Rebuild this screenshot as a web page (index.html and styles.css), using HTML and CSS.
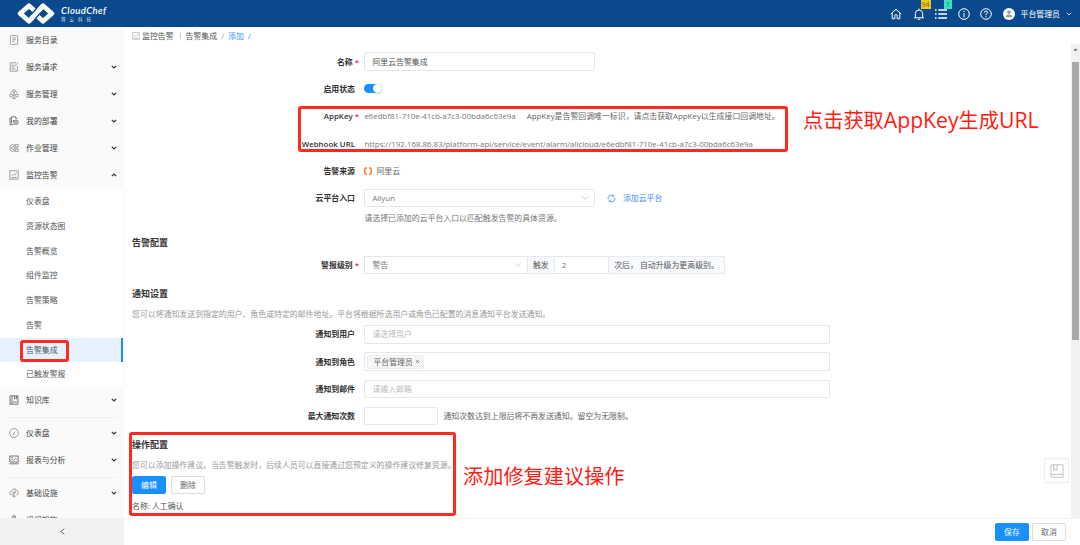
FILE: index.html
```html
<!DOCTYPE html>
<html lang="zh-CN">
<head>
  <meta charset="utf-8">
  <title>CloudChef</title>
  <link rel="stylesheet" href="styles.css">
</head>
<body>
  <!-- shared icon shapes -->
  <svg class="defs">
    <symbol id="down" viewBox="0 0 6 6"><path d="M.8 1.8 3 4 5.2 1.8"/></symbol>
    <symbol id="chart" viewBox="0 0 10 10"><path d="M.8.8h8.4v8.4H.8zM2.2 7.6h5.6M2.5 6l2-2 1.2 1.2 2.1-2.7"/></symbol>
  </svg>

  <header class="header">
    <div class="logo">
      <svg class="logo-mark" viewBox="0 0 38 23">
        <g fill="none" stroke-linejoin="round">
          <path d="M17 8.2 12 3.8 3.2 11.5 12 19.2 26 3.8 34.8 11.5 26 19.2 21 14.8" stroke="#fff" stroke-width="4.8"/>
          <path d="M16.2 14.6 21.8 8.4" stroke="#0a4a8c" stroke-width="6.4"/>
          <path d="M12 19.2 26 3.8" stroke="#fff" stroke-width="4.6"/>
        </g>
      </svg>
      <div class="logo-text">
        <div class="logo-name">CloudChef</div>
        <div class="logo-sub">骞云科技</div>
      </div>
    </div>
    <div class="tools">
      <span class="tool"><svg viewBox="0 0 12 12"><path d="M.8 6.2 6 1.2l5.2 5M2.2 5.2v5.6h2.6V7.2Q6 6 7.2 7.2v3.6h2.6V5.2"/></svg></span>
      <span class="tool"><svg viewBox="0 0 12 12"><path d="M1 9.8h10M2.4 9.8V5.4Q2.6 2 6 2t3.6 3.4v4.4M6 .6V2M4.8 11.3h2.4"/></svg><em class="badge yellow">94</em></span>
      <span class="tool"><svg viewBox="0 0 12 12"><path d="M0 2h1.6M0 6h1.6M0 10h1.6M3.3 2H12M3.3 6H12M3.3 10H12" stroke-width="1.4"/></svg><em class="badge green">1</em></span>
      <span class="tool"><svg viewBox="0 0 12 12"><circle cx="6" cy="6" r="5.3"/><path d="M6 5v4.2M6 2.8v1.2"/></svg></span>
      <span class="tool"><svg viewBox="0 0 12 12"><circle cx="6" cy="6" r="5.3"/><path d="M4.3 4.7Q4.5 3 6 3t1.7 1.5Q7.6 5.3 6 6.3v1M6 8.2v1.1"/></svg></span>
      <span class="avatar"><svg viewBox="0 0 12 12"><circle cx="6" cy="4.3" r="1.8"/><path d="M2.9 9.3V8Q3.3 6.6 6 6.6T9.1 8v1.3z"/></svg></span>
      <span class="user">平台管理员</span>
      <svg class="user-arrow"><use href="#down"/></svg>
    </div>
  </header>

  <div class="layout">
    <aside class="sidebar">
      <nav class="menu">
        <div class="item"><svg class="icon" viewBox="0 0 10 10"><path d="M2.3.6h5.4q1 0 1 1v6.8q0 1-1 1H2.3q-1 0-1-1V1.6q0-1 1-1zM3.2 3h3.8M3.2 4.8h3.8M3.2 6.6h2.3"/></svg>服务目录</div>
        <div class="item"><svg class="icon" viewBox="0 0 10 10"><path d="M7 .8H1.2v8.4h7.2V4M2.6 3.2h3M2.6 5h3M2.6 7h4M5.8 3.8 9.4.6"/></svg>服务请求<svg class="arrow"><use href="#down"/></svg></div>
        <div class="item"><svg class="icon" viewBox="0 0 10 10"><circle cx="5" cy="2" r="1.4"/><circle cx="2" cy="6.6" r="1.4"/><circle cx="8" cy="6.6" r="1.4"/><circle cx="5" cy="5.5" r="1"/><path d="M3 9.3h4M5 6.5v2.8M1.4 4.4 3.2 2.2M8.6 4.4 6.8 2.2"/></svg>服务管理<svg class="arrow"><use href="#down"/></svg></div>
        <div class="item"><svg class="icon dark" viewBox="0 0 10 10"><path d="M4.5 8.6H1V2h1.5V.8h4V2h1.2v1M2.5 2.5v5M4.3 4v2"/><circle cx="7" cy="6.3" r="2.2"/><circle cx="7" cy="6.3" r=".6"/></svg>我的部署<svg class="arrow"><use href="#down"/></svg></div>
        <div class="item"><svg class="icon" viewBox="0 0 10 10"><path d="M4 1 1 3v4l3 2M4.2 3 2.3 5l1.9 2M5 1v8M6.4 1.4h2.8v2.4H6.4zM6.4 6.2h2.8v2.4H6.4zM5 5h4"/></svg>作业管理<svg class="arrow"><use href="#down"/></svg></div>
        <div class="item"><svg class="icon"><use href="#chart"/></svg>监控告警<svg class="arrow up"><use href="#down"/></svg></div>
        <div class="submenu">
          <div class="subitem">仪表盘</div>
          <div class="subitem">资源状态图</div>
          <div class="subitem">告警概览</div>
          <div class="subitem">组件监控</div>
          <div class="subitem">告警策略</div>
          <div class="subitem">告警</div>
          <div class="subitem active">告警集成</div>
          <div class="subitem">已触发警报</div>
        </div>
        <div class="item"><svg class="icon dark" viewBox="0 0 10 10"><path d="M1 .8h8v8.4H1zM3 1v8M5.5 1v3l1-.8 1 .8V1M4 7h4"/></svg>知识库<svg class="arrow"><use href="#down"/></svg></div>
        <div class="divider"></div>
        <div class="item"><svg class="icon" viewBox="0 0 10 10"><circle cx="5" cy="5" r="4.4"/><path d="M4 6.3 6.2 3.5M4 6.3h1.3"/></svg>仪表盘<svg class="arrow"><use href="#down"/></svg></div>
        <div class="item"><svg class="icon dark" viewBox="0 0 10 10"><path d="M.8 1h8.4v6H.8zM.5 8.8h9M2.2 2.8h2M2.2 4.8h1.5M4.5 5.5l2-2 1.2 1"/></svg>报表与分析<svg class="arrow"><use href="#down"/></svg></div>
        <div class="divider"></div>
        <div class="item"><svg class="icon" viewBox="0 0 10 10"><path d="M2.5 7Q.5 6.6.7 4.8.9 3.3 2.5 3.2 3 .9 5.2.9t2.8 2q1.5.3 1.4 2Q9.2 6.6 7.6 7M3 5.4l4-2.6M3 7l4-3M5 6v3.4M3.5 8.2h3"/></svg>基础设施<svg class="arrow"><use href="#down"/></svg></div>
        <div class="item"><svg class="icon dark" viewBox="0 0 10 10"><circle cx="5" cy="2" r="1.4"/><path d="M5 3.4V6M1.5 8V6h7v2"/></svg>组织架构</div>
      </nav>
      <div class="collapse"><svg viewBox="0 0 6 8"><path d="M5.2.8.8 4l4.4 3.2"/></svg></div>
    </aside>

    <main class="main">
      <div class="breadcrumb">
        <svg class="crumb-icon"><use href="#chart"/></svg>
        <span>监控告警</span><i class="bar"></i><span>告警集成</span><span class="slash">/</span><a>添加</a><a class="slash">/</a>
      </div>

      <div class="content">
        <form class="form">
          <div class="row"><label class="required">名称</label><div class="input w230 text">阿里云告警集成</div></div>
          <div class="row"><label>启用状态</label><span class="switch"></span></div>
          <div class="row"><label class="required">AppKey</label><span class="uuid">e6edbf81-710e-41cb-a7c3-00bda6c63e9a</span><span>AppKey是告警回调唯一标识，请点击获取AppKey以生成接口回调地址。</span></div>
          <div class="row"><label>Webhook URL</label><span class="url">https://192.168.86.83/platform-api/service/event/alarm/alicloud/e6edbf81-710e-41cb-a7c3-00bda6c63e9a</span></div>
          <div class="row"><label>告警来源</label><svg class="aliyun" viewBox="0 0 8 8"><path d="M3 1H2Q.8 1 .8 2.2v3.6Q.8 7 2 7h1M5 1h1q1.2 0 1.2 1.2v3.6Q7.2 7 6 7H5"/></svg><span>阿里云</span></div>
          <div class="row"><label>云平台入口</label>
            <div class="input w230">Aliyun<svg class="select-arrow"><use href="#down"/></svg></div>
            <svg class="refresh" viewBox="0 0 10 10"><path d="M1.2 5.8A3.8 3.8 0 0 1 7.3 2M8.8 4.2A3.8 3.8 0 0 1 2.7 8"/><path d="M7.6 1v1.7H5.8M2.4 9V7.3h1.8" stroke-width=".7"/></svg>
            <a>添加云平台</a>
          </div>
          <p class="help">请选择已添加的云平台入口以匹配触发告警的具体资源。</p>

          <h3>告警配置</h3>
          <div class="row level"><label class="required">警报级别</label>
            <div class="group">
              <div class="input level-select">警告<svg class="select-arrow"><use href="#down"/></svg></div>
              <div class="addon">触发</div>
              <div class="input count">2</div>
              <div class="addon last">次后， 自动升级为更高级别。</div>
            </div>
          </div>

          <h3 class="notify">通知设置</h3>
          <p class="desc notify-desc">您可以将通知发送到指定的用户、角色或特定的邮件地址。平台将根据所选用户或角色已配置的消息通知平台发送通知。</p>
          <div class="row"><label>通知到用户</label><div class="input wide placeholder">请选择用户</div></div>
          <div class="row"><label>通知到角色</label><div class="input wide tags"><span class="tag">平台管理员<svg viewBox="0 0 6 6"><path d="m1 1 4 4M5 1 1 5"/></svg></span></div></div>
          <div class="row"><label>通知到邮件</label><div class="input wide placeholder">请输入邮箱</div></div>
          <div class="row"><label>最大通知次数</label><div class="input max"></div><span>通知次数达到上限后将不再发送通知。留空为无限制。</span></div>

          <h3 class="action">操作配置</h3>
          <p class="desc">您可以添加操作建议。当告警触发时，后续人员可以直接通过您预定义的操作建议修复资源。</p>
          <div class="buttons"><span class="btn primary">编辑</span><span class="btn">删除</span></div>
          <p class="name">名称: 人工确认</p>
        </form>
        <div class="scrollbar"><svg viewBox="0 0 6 4"><path d="M.5 3.4 3 .6l2.5 2.8z"/></svg><div class="thumb"></div></div>
      </div>

      <footer class="footer"><span class="btn primary">保存</span><span class="btn">取消</span></footer>
    </main>
  </div>

  <div class="manual"><svg viewBox="0 0 14 14"><path d="M1 11.4V1.6q0-.8.8-.8H13v9.6H2.2Q1 10.4 1 11.8t1.2 1.4H13v-2.8M3.6 1v5.6l1.7-1.3L7 6.6V1"/></svg></div>

  <!-- annotations -->
  <div class="mark mark-menu"></div>
  <div class="mark mark-key"></div>
  <div class="mark mark-action"></div>
  <div class="note note-key">点击获取<span>AppKey</span>生成<span>URL</span></div>
  <div class="note note-action">添加修复建议操作</div>
</body>
</html>
```

FILE: styles.css
```css
* {
  box-sizing: border-box;
}
body {
  margin: 0;
  width: 1080px;
  height: 545px;
  overflow: hidden;
  position: relative;
  display: flex;
  flex-direction: column;
  font: 7.9px/12px "Open Sans", "Noto Sans CJK SC", sans-serif;
  color: #555;
  background: #fff;
}
svg {
  fill: none;
  stroke: currentColor;
  flex: none;
}
.defs {
  display: none;
}
a {
  color: #3d8ef8;
}
p {
  margin: 0;
}

/* header */
.header {
  height: 27px;
  flex: none;
  display: flex;
  justify-content: space-between;
  padding-left: 17px;
  background: #0a4a8c;
  color: #fff;
}
.logo {
  display: flex;
  align-items: center;
  gap: 6px;
}
.logo-mark {
  width: 38px;
  height: 23px;
  stroke: none;
}
.logo-name {
  font: italic 600 9.6px/10px Lato, sans-serif;
  letter-spacing: 0.35px;
}
.logo-sub {
  font-size: 4.5px;
  line-height: 6px;
  letter-spacing: 4px;
  opacity: 0.8;
}
.tools {
  display: flex;
  align-items: center;
  padding-right: 8px;
}
.tool {
  position: relative;
  display: flex;
  margin-right: 10.5px;
}
.tool svg {
  width: 12px;
  height: 12px;
}
.badge {
  position: absolute;
  top: -8px;
  left: 8px;
  height: 9px;
  padding: 0 1px;
  font-style: normal;
  font-size: 7px;
  line-height: 9px;
}
.yellow {
  background: #f5c61a;
  color: #596b3a;
}
.green {
  left: 9px;
  width: 8px;
  text-align: center;
  background: #3ddfc0;
  color: #14776e;
}
.avatar {
  width: 12px;
  height: 12px;
  border-radius: 6px;
  background: #fff;
  display: flex;
}
.avatar svg {
  width: 12px;
  height: 12px;
  fill: #999;
  stroke: none;
}
.user {
  margin: 0 6px 0 6px;
}
.user-arrow {
  width: 6px;
  height: 6px;
  stroke-width: 0.8;
}

.layout {
  flex: 1;
  display: flex;
  min-height: 0;
}

/* sidebar */
.sidebar {
  width: 124px;
  flex: none;
  display: flex;
  flex-direction: column;
  background: #fafafa;
}
.menu {
  flex: 1;
  min-height: 0;
  overflow: hidden;
}
.item {
  height: 27px;
  display: flex;
  align-items: center;
  padding: 0 7px 1px 9px;
  color: #444;
}
.icon {
  width: 10px;
  height: 10px;
  margin-right: 7px;
  color: #888;
  stroke-width: 0.8;
}
.icon.dark {
  color: #555;
}
.arrow {
  width: 6px;
  height: 6px;
  margin-left: auto;
  color: #333;
  stroke-width: 1.2;
}
.up {
  transform: rotate(180deg);
}
.submenu {
  background: #fff;
  border-right: 1px solid #f5f5f5;
}
.subitem {
  height: 24.75px;
  line-height: 24.75px;
  padding-left: 26px;
}
.active {
  background: #e6f3ff;
  border-right: 2px solid #1890ff;
}
.divider {
  height: 1px;
  margin: 2.8px 7px 2.2px 9px;
  background: #eee;
}
.collapse {
  height: 27px;
  display: flex;
  align-items: center;
  justify-content: center;
  background: #f2f2f2;
}
.collapse svg {
  width: 5px;
  height: 7px;
}

/* main */
.main {
  flex: 1;
  min-width: 0;
  display: flex;
  flex-direction: column;
}
.breadcrumb {
  height: 17px;
  padding-left: 8px;
  display: flex;
  align-items: center;
}
.crumb-icon {
  width: 8px;
  height: 8px;
  margin-right: 2px;
  color: #999;
  stroke-width: 0.7;
}
.bar {
  width: 1px;
  height: 7px;
  margin: 0 5px 0 6px;
  background: #ccc;
}
.slash {
  margin: 0 4px;
}
span.slash {
  color: #999;
}
.content {
  flex: 1;
  min-height: 0;
  display: flex;
}
.form {
  flex: 1;
  padding: 4px 0 0 8px;
  overflow: hidden;
}
.row {
  height: 27.3px;
  display: flex;
  align-items: center;
  white-space: nowrap;
  color: #666;
}
label {
  width: 227px;
  flex: none;
  margin-right: 5.4px;
  padding-right: 4px;
  text-align: right;
  font-weight: 600;
  color: #333;
}
.required {
  padding-right: 0;
}
.required::after {
  content: "*";
  margin-left: 2px;
  color: #f5222d;
}
.input {
  height: 18.6px;
  padding: 0 7px;
  display: flex;
  align-items: center;
  border: 1px solid #e4e7ea;
  border-radius: 2px;
  background: #fff;
  color: #777;
}
.text {
  color: #555;
}
.w230 {
  width: 230.5px;
}
.wide {
  width: 465.5px;
}
.max {
  width: 74px;
  margin-right: 5px;
}
.placeholder {
  color: #bbb;
}
.select-arrow {
  width: 8px;
  height: 8px;
  margin-left: auto;
  margin-right: -2px;
  color: #bbb;
  stroke-width: 0.6;
}
.switch {
  width: 18px;
  height: 9px;
  border-radius: 5px;
  background: #1890ff;
  display: flex;
  justify-content: flex-end;
}
.switch::after {
  content: "";
  width: 9px;
  height: 9px;
  border-radius: 5px;
  background: #fff;
  box-shadow: 0 1px 2px rgba(0, 0, 0, 0.2);
}
.uuid {
  margin-right: 11px;
}
.uuid,
.url {
  color: #777;
}
.aliyun {
  width: 8px;
  height: 8px;
  margin-right: 4px;
  color: #ff7a22;
  stroke-width: 1.5;
}
.refresh {
  width: 9px;
  height: 9px;
  margin: 0 7px 0 12px;
  color: #3d8ef8;
}
.help {
  padding-left: 232.4px;
  color: #777;
}
h3 {
  margin: 11px 0 1px;
  font-size: 9px;
  line-height: 16px;
  font-weight: 600;
  color: #333;
}
.group {
  display: flex;
}
.group .input,
.addon {
  height: 18px;
  border-radius: 0;
}
.level-select {
  width: 163.5px;
}
.count {
  width: 54.5px;
  border-left: 0;
}
.addon {
  display: flex;
  align-items: center;
  padding: 0 5px;
  border: 1px solid #e6ebf1;
  border-left: 0;
  background: #f8fafd;
  color: #555;
}
.last {
  width: 116px;
}
h3.notify {
  margin: 6.5px 0 6px;
}
h3.action {
  margin: 7.5px 0 6px;
}
.desc {
  color: #999;
}
.notify-desc {
  margin-bottom: 1px;
}
.tags {
  padding-left: 2px;
}
.tag {
  height: 14px;
  padding: 0 3px 0 5px;
  display: flex;
  align-items: center;
  gap: 2px;
  border: 1px solid #eee;
  border-radius: 2px;
  background: #f6f6f6;
  color: #666;
}
.tag svg {
  width: 5px;
  height: 5px;
  stroke-width: 0.8;
}
.buttons {
  display: flex;
  gap: 5px;
  margin: 5px 0 6px;
}
.btn {
  width: 34px;
  height: 18px;
  line-height: 16px;
  text-align: center;
  border: 1px solid #ddd;
  border-radius: 2px;
  background: #fff;
  color: #666;
}
.primary {
  border-color: #1890ff;
  background: #1890ff;
  color: #fff;
}
.scrollbar {
  width: 9px;
  padding: 4px 1px 0;
  background: #f1f1f1;
}
.scrollbar svg {
  display: block;
  width: 5px;
  height: 3px;
  margin: 0 auto;
  fill: #444;
  stroke: none;
}
.thumb {
  height: 278px;
  margin-top: 11px;
  background: #a8a8a8;
}
.footer {
  height: 27px;
  padding: 4px 14px 0 0;
  display: flex;
  justify-content: flex-end;
  gap: 3px;
  border-top: 1px solid #f3f3f3;
}

/* floating help button */
.manual {
  position: absolute;
  left: 1044px;
  top: 458px;
  width: 25px;
  height: 25px;
  display: flex;
  align-items: center;
  justify-content: center;
  border: 1px solid #eee;
  border-radius: 2px;
  background: #fff;
  color: #bbb;
}
.manual svg {
  width: 14px;
  height: 14px;
  stroke-width: 0.9;
}

/* annotations */
.mark {
  position: absolute;
  border: 3px solid #ff2a20;
  border-radius: 3px;
}
.mark-menu {
  left: 20px;
  top: 340px;
  width: 49px;
  height: 22px;
}
.mark-key {
  left: 298px;
  top: 106px;
  width: 490px;
  height: 46px;
}
.mark-action {
  left: 129px;
  top: 432px;
  width: 327px;
  height: 84px;
}
.note {
  position: absolute;
  font-size: 20.2px;
  line-height: 28px;
  white-space: nowrap;
  color: #ff1c12;
}
.note span {
  font-size: 21.2px;
}
.note-key {
  left: 803px;
  top: 106px;
}
.note-action {
  left: 463px;
  top: 462px;
}
```
